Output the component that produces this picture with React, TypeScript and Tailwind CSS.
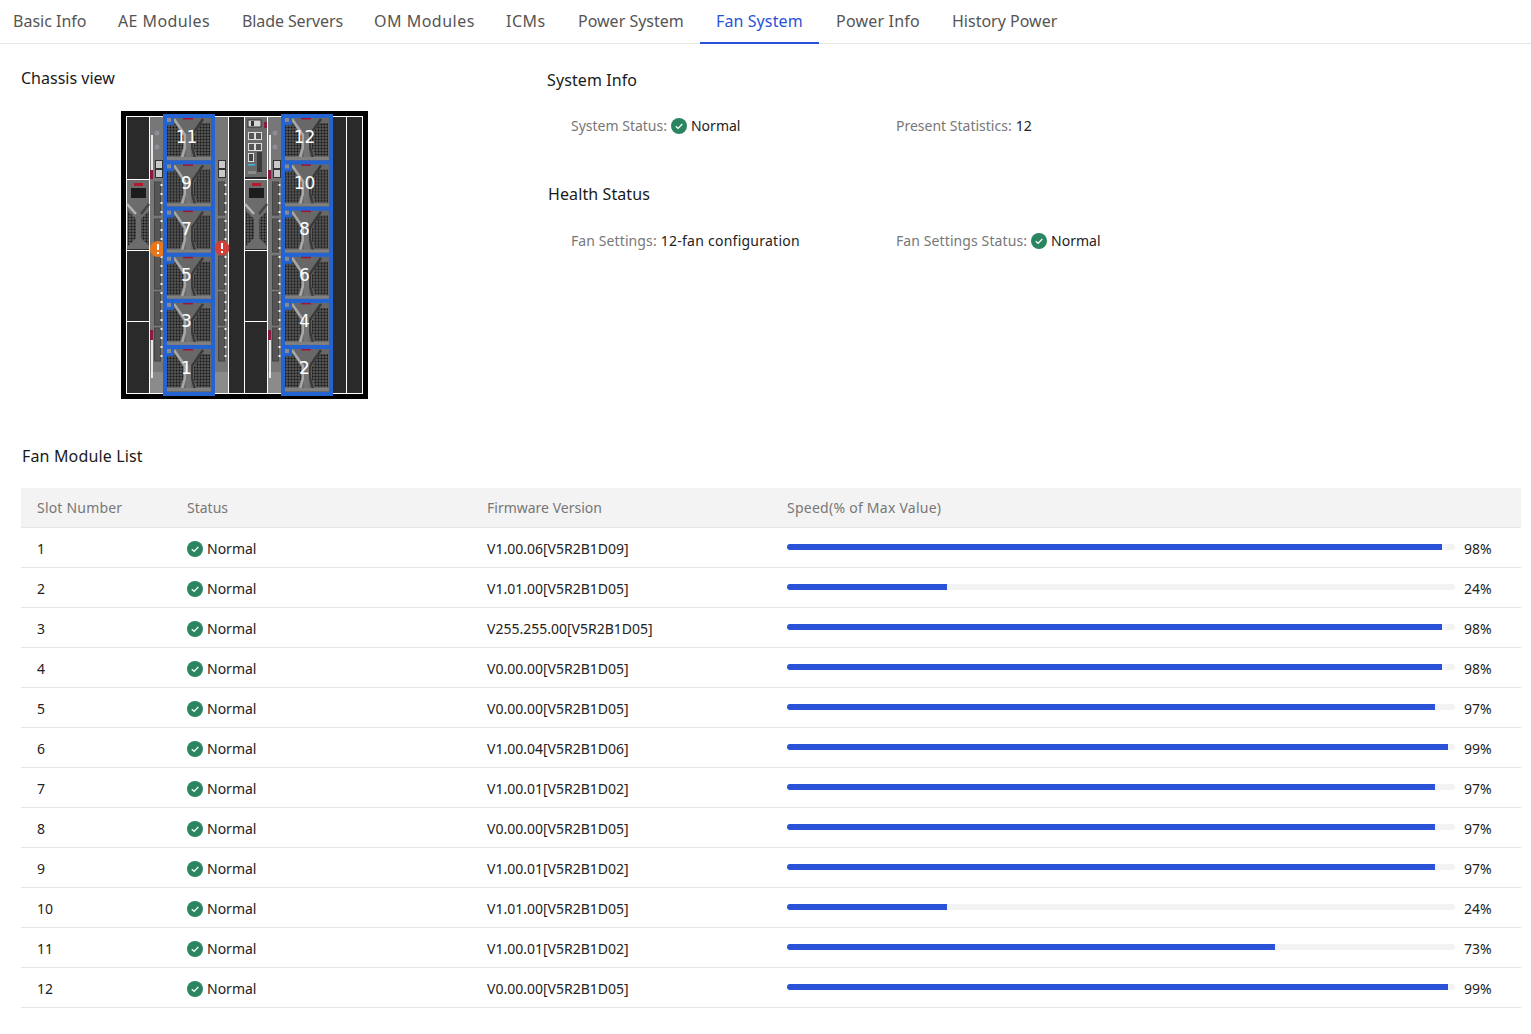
import type { ReactNode } from "react"

const tabs = [
  { label: "Basic Info", width: "w-[105px]" },
  { label: "AE Modules", width: "w-[124px] tracking-[0.4px]" },
  { label: "Blade Servers", width: "w-[132px] tracking-[-0.1px]" },
  { label: "OM Modules", width: "w-[132px] tracking-[0.5px]" },
  { label: "ICMs", width: "w-[72px] tracking-[0.5px]" },
  { label: "Power System", width: "w-[138px]" },
  { label: "Fan System", width: "w-[119px] tracking-[0.1px]", active: true },
  { label: "Power Info", width: "ml-px w-[116px] tracking-[0.2px]" },
  { label: "History Power", width: "w-[140px]" },
]

const fans = [
  { slot: 1, firmware: "V1.00.06[V5R2B1D09]", speed: 98 },
  { slot: 2, firmware: "V1.01.00[V5R2B1D05]", speed: 24 },
  { slot: 3, firmware: "V255.255.00[V5R2B1D05]", speed: 98 },
  { slot: 4, firmware: "V0.00.00[V5R2B1D05]", speed: 98 },
  { slot: 5, firmware: "V0.00.00[V5R2B1D05]", speed: 97 },
  { slot: 6, firmware: "V1.00.04[V5R2B1D06]", speed: 99 },
  { slot: 7, firmware: "V1.00.01[V5R2B1D02]", speed: 97 },
  { slot: 8, firmware: "V0.00.00[V5R2B1D05]", speed: 97 },
  { slot: 9, firmware: "V1.00.01[V5R2B1D02]", speed: 97 },
  { slot: 10, firmware: "V1.01.00[V5R2B1D05]", speed: 24 },
  { slot: 11, firmware: "V1.00.01[V5R2B1D02]", speed: 73 },
  { slot: 12, firmware: "V0.00.00[V5R2B1D05]", speed: 99 },
]

function StatusIcon() {
  return (
    <svg width="16" height="16" viewBox="0 0 16 16" className="shrink-0">
      <circle cx="8" cy="8" r="8" fill="#2a8560" />
      <path d="M4.8 8.2 7.1 10.4 11.3 6" fill="none" stroke="#fff" strokeWidth="1.3" />
    </svg>
  )
}

function Normal() {
  return (
    <div className="flex items-center gap-1 text-[#222]">
      <StatusIcon />
      <span>Normal</span>
    </div>
  )
}

// one fan tray, drawn from the top left corner of its blue frame
function Fan({ x, y, slot }: { x: number; y: number; slot: number }) {
  return (
    <g transform={`translate(${x} ${y})`}>
      <rect x="2" y="2" width="48" height="46" fill="#686868" />
      <path d="M4 9H12L20 22V34L17 42H4Z" fill="url(#mesh)" />
      <path d="M47 9H38L31 22V34L34 42H47Z" fill="url(#mesh)" />
      <path d="M11 5 22 21V33L19 44" fill="none" stroke="#a8a8a8" strokeWidth="2.5" />
      <path d="M40 5 29 21V33L32 44" fill="none" stroke="#3a3a3a" strokeWidth="2.5" />
      <rect x="23" y="20" width="5" height="25" fill="#747474" />
      <rect x="20" y="3" width="10" height="2.5" fill="#a3162e" />
      <rect x="4" y="43" width="44" height="3" fill="#808080" />
      <rect x="2" y="2" width="48" height="47" fill="none" stroke="#2364d2" strokeWidth="4" />
      <rect x="2" y="2" width="9" height="9" fill="#2364d2" />
      <rect x="4" y="4" width="4" height="4" fill="#8a8a8a" />
      <text
        x="23.5"
        y="28.5"
        textAnchor="middle"
        fontSize="17"
        fill="#fff"
        fontFamily="'DejaVu Sans', sans-serif"
      >
        {slot}
      </text>
    </g>
  )
}

// the blade behind the fan trays, the right hand one has no strip past its trays
function Blade({ x, width, strip }: { x: number; width: number; strip: boolean }) {
  const vents = [182, 219, 256, 292, 328]
  return (
    <g transform={`translate(${x} 0)`}>
      <rect x="0" y="117" width={width} height="276" fill="#777" />
      <rect x="0" y="372" width={width} height="21" fill="#8b8b8b" />
      <rect x="1" y="135" width="2" height="36" fill="#e8e8e8" />
      <rect x="0" y="170" width="3" height="9" fill="#8c1a3c" />
      <rect x="0" y="330" width="3" height="10" fill="#8c1a3c" />
      <rect x="1" y="340" width="2" height="38" fill="#e8e8e8" />
      <circle cx="7" cy="133" r="2.5" fill="#8d8d96" />
      <circle cx="7" cy="147" r="2.5" fill="#8d8d96" />
      <rect x="5.5" y="160.5" width="7" height="8" fill="#c9c9c9" stroke="#333" />
      <rect x="5.5" y="169.5" width="7" height="8" fill="#c9c9c9" stroke="#333" />
      {vents.map((v) => (
        <rect key={v} x="4.5" y={v} width="6" height="33" fill="#555" stroke="#444" />
      ))}
      <path d="M11.5 184V362" stroke="#eee" strokeWidth="2" strokeDasharray="2 7" />
      {strip && (
        <g>
          <rect x="68.5" y="160.5" width="7" height="8" fill="#c9c9c9" stroke="#333" />
          <rect x="68.5" y="169.5" width="7" height="8" fill="#c9c9c9" stroke="#333" />
          {vents.map((v) => (
            <rect key={v} x="68.5" y={v} width="6" height="33" fill="#555" stroke="#444" />
          ))}
          <path d="M75.5 184V362" stroke="#eee" strokeWidth="2" strokeDasharray="2 7" />
        </g>
      )}
    </g>
  )
}

function Psu({ x }: { x: number }) {
  return (
    <g transform={`translate(${x} 0)`}>
      <rect x="0" y="180" width="22" height="69" fill="#6c6c6c" />
      <rect x="7" y="183" width="9" height="3" fill="#b01c2e" />
      <rect x="4" y="188" width="15" height="10" fill="#1c1c1c" />
      <path d="M1 211 9 219V238L1 246Z" fill="url(#mesh)" />
      <path d="M22 211 14 219V238L22 246Z" fill="url(#mesh)" />
      <path d="M0 204 9 214" fill="none" stroke="#b5b5b5" strokeWidth="2.5" />
      <path d="M22 204 14 214" fill="none" stroke="#444" strokeWidth="2.5" />
    </g>
  )
}

function ChassisView() {
  const rows = [114, 160.4, 206.6, 252.8, 298.9, 345]
  const left = [11, 9, 7, 5, 3, 1]
  const right = [12, 10, 8, 6, 4, 2]
  return (
    <svg width="247" height="288" viewBox="121 111 247 288" className="block">
      <defs>
        <pattern id="mesh" width="3" height="3" patternUnits="userSpaceOnUse">
          <rect width="3" height="3" fill="#555" />
          <circle cx="1.5" cy="1.5" r="1" fill="#141414" />
        </pattern>
      </defs>
      <rect x="121" y="111" width="247" height="288" fill="#000" />
      <rect x="126.5" y="116.5" width="236" height="277" fill="#2a2a2a" stroke="#fff" />
      <path
        d="M149.5 116V393M228.5 116V393M244.5 116V393M267.5 116V393M346.5 116V393M127 179.5H149M127 250.5H149M127 321.5H149M245 179.5H267M245 250.5H267M245 321.5H267"
        stroke="#fff"
      />
      <Blade x={150} width={78} strip />
      <Blade x={268} width={65} strip={false} />
      <Psu x={127} />
      <Psu x={245} />
      <rect x="245" y="117" width="22" height="60" fill="#6a6a6a" />
      <rect x="264" y="122" width="3" height="6" fill="#8c1a3c" />
      <rect x="248" y="120" width="13" height="7" fill="#d5d5d5" stroke="#333" />
      <rect x="251" y="121" width="3" height="5" fill="#333" />
      <rect x="248.5" y="132.5" width="6" height="7" fill="#555" stroke="#ddd" />
      <rect x="255.5" y="132.5" width="6" height="7" fill="#555" stroke="#ddd" />
      <rect x="248.5" y="143.5" width="6" height="7" fill="#555" stroke="#ddd" />
      <rect x="255.5" y="143.5" width="6" height="7" fill="#555" stroke="#ddd" />
      <rect x="248.5" y="153.5" width="5" height="8" fill="#444" stroke="#ddd" />
      <rect x="257" y="152" width="5" height="20" fill="#3a3a3a" />
      <rect x="248" y="164" width="7" height="1.5" fill="#3fb4e0" />
      <rect x="248" y="171" width="8" height="3" fill="#8a8a8a" />
      <circle cx="158" cy="249" r="8" fill="#e8761a" />
      <rect x="157" y="244" width="2" height="6" fill="#fff" />
      <rect x="157" y="252" width="2" height="2" fill="#fff" />
      {rows.map((y, i) => (
        <Fan key={left[i]} x={163} y={y} slot={left[i]} />
      ))}
      {rows.map((y, i) => (
        <Fan key={right[i]} x={281} y={y} slot={right[i]} />
      ))}
      <circle cx="222" cy="248" r="7.5" fill="#d0403a" />
      <rect x="221" y="243" width="2" height="6" fill="#fff" />
      <rect x="221" y="251" width="2" height="2" fill="#fff" />
    </svg>
  )
}

function Label({ name, wide, children }: { name: string; wide?: boolean; children: ReactNode }) {
  return (
    <div className="flex w-[325px] items-center gap-1 text-sm text-[#222]">
      <span className={wide ? "tracking-[0.1px] text-[#777]" : "text-[#777]"}>{name}:</span>
      {children}
    </div>
  )
}

export default function App() {
  return (
    <div className="min-h-[1034px] bg-white font-['Noto_Sans',sans-serif]">
      <div className="flex h-[44px] border-b border-[#e6e6e6]">
        <div className="-ml-[3px] flex">
          {tabs.map((t) => (
            <div
              key={t.label}
              className={
                t.active
                  ? `${t.width} h-[44px] border-b-2 border-[#2a52d6] pl-4 pt-[9px] text-base text-[#2a52d6]`
                  : `${t.width} h-[44px] pl-4 pt-[9px] text-base text-[#555]`
              }
            >
              {t.label}
            </div>
          ))}
        </div>
      </div>

      <div className="flex h-[400px] pl-[21px]">
        <div className="w-[526px] pt-[22px]">
          <h2 className="h-[24px] text-base leading-[24px] text-[#1a1a1a]">Chassis view</h2>
          <div className="ml-[100px] mt-[21px]">
            <ChassisView />
          </div>
        </div>
        <div className="pt-[24px]">
          <h2 className="h-[24px] text-base leading-[24px] tracking-[0.1px] text-[#1a1a1a]">System Info</h2>
          <div className="ml-[24px] mt-[24px] flex h-[20px]">
            <Label name="System Status">
              <Normal />
            </Label>
            <Label name="Present Statistics">12</Label>
          </div>
          <h2 className="ml-px mt-[46px] h-[24px] text-base leading-[24px] tracking-[0.1px] text-[#1a1a1a]">
            Health Status
          </h2>
          <div className="ml-[24px] mt-[25px] flex h-[20px]">
            <Label name="Fan Settings" wide>
              <span className="tracking-[0.25px]">12-fan configuration</span>
            </Label>
            <Label name="Fan Settings Status" wide>
              <Normal />
            </Label>
          </div>
        </div>
      </div>

      <div className="pl-[21px] pr-[10px]">
        <h2 className="ml-px h-[24px] text-base leading-[24px] tracking-[0.15px] text-[#1a1a1a]">Fan Module List</h2>
        <div className="mt-[20px]">
          <div className="grid h-[40px] grid-cols-[150px_300px_300px_1fr] items-center border-b border-[#e6e6e6] bg-[#f3f3f3] text-sm text-[#777]">
            <div className="pl-4 pt-px tracking-[0.2px]">Slot Number</div>
            <div className="pl-4 pt-px">Status</div>
            <div className="pl-4 pt-px">Firmware Version</div>
            <div className="pl-4 pt-px tracking-[0.25px]">Speed(% of Max Value)</div>
          </div>
          {fans.map((f) => (
            <div
              key={f.slot}
              className="grid h-[40px] grid-cols-[150px_300px_300px_1fr] items-center border-b border-[#e6e6e6] text-sm text-[#222]"
            >
              <div className="pl-4 pt-[2px]">{f.slot}</div>
              <div className="pl-4 pt-[2px]">
                <Normal />
              </div>
              <div className="pl-4 pt-[2px]">{f.firmware}</div>
              <div className="flex items-center pl-4">
                <div className="mb-[2px] h-[6px] w-[668px] rounded-full bg-[#f3f3f3]">
                  <div className="h-full rounded-l-full bg-[#2a52d6]" style={{ width: `${f.speed}%` }} />
                </div>
                <span className="ml-[9px] pt-[2px]">{f.speed}%</span>
              </div>
            </div>
          ))}
        </div>
      </div>
    </div>
  )
}
